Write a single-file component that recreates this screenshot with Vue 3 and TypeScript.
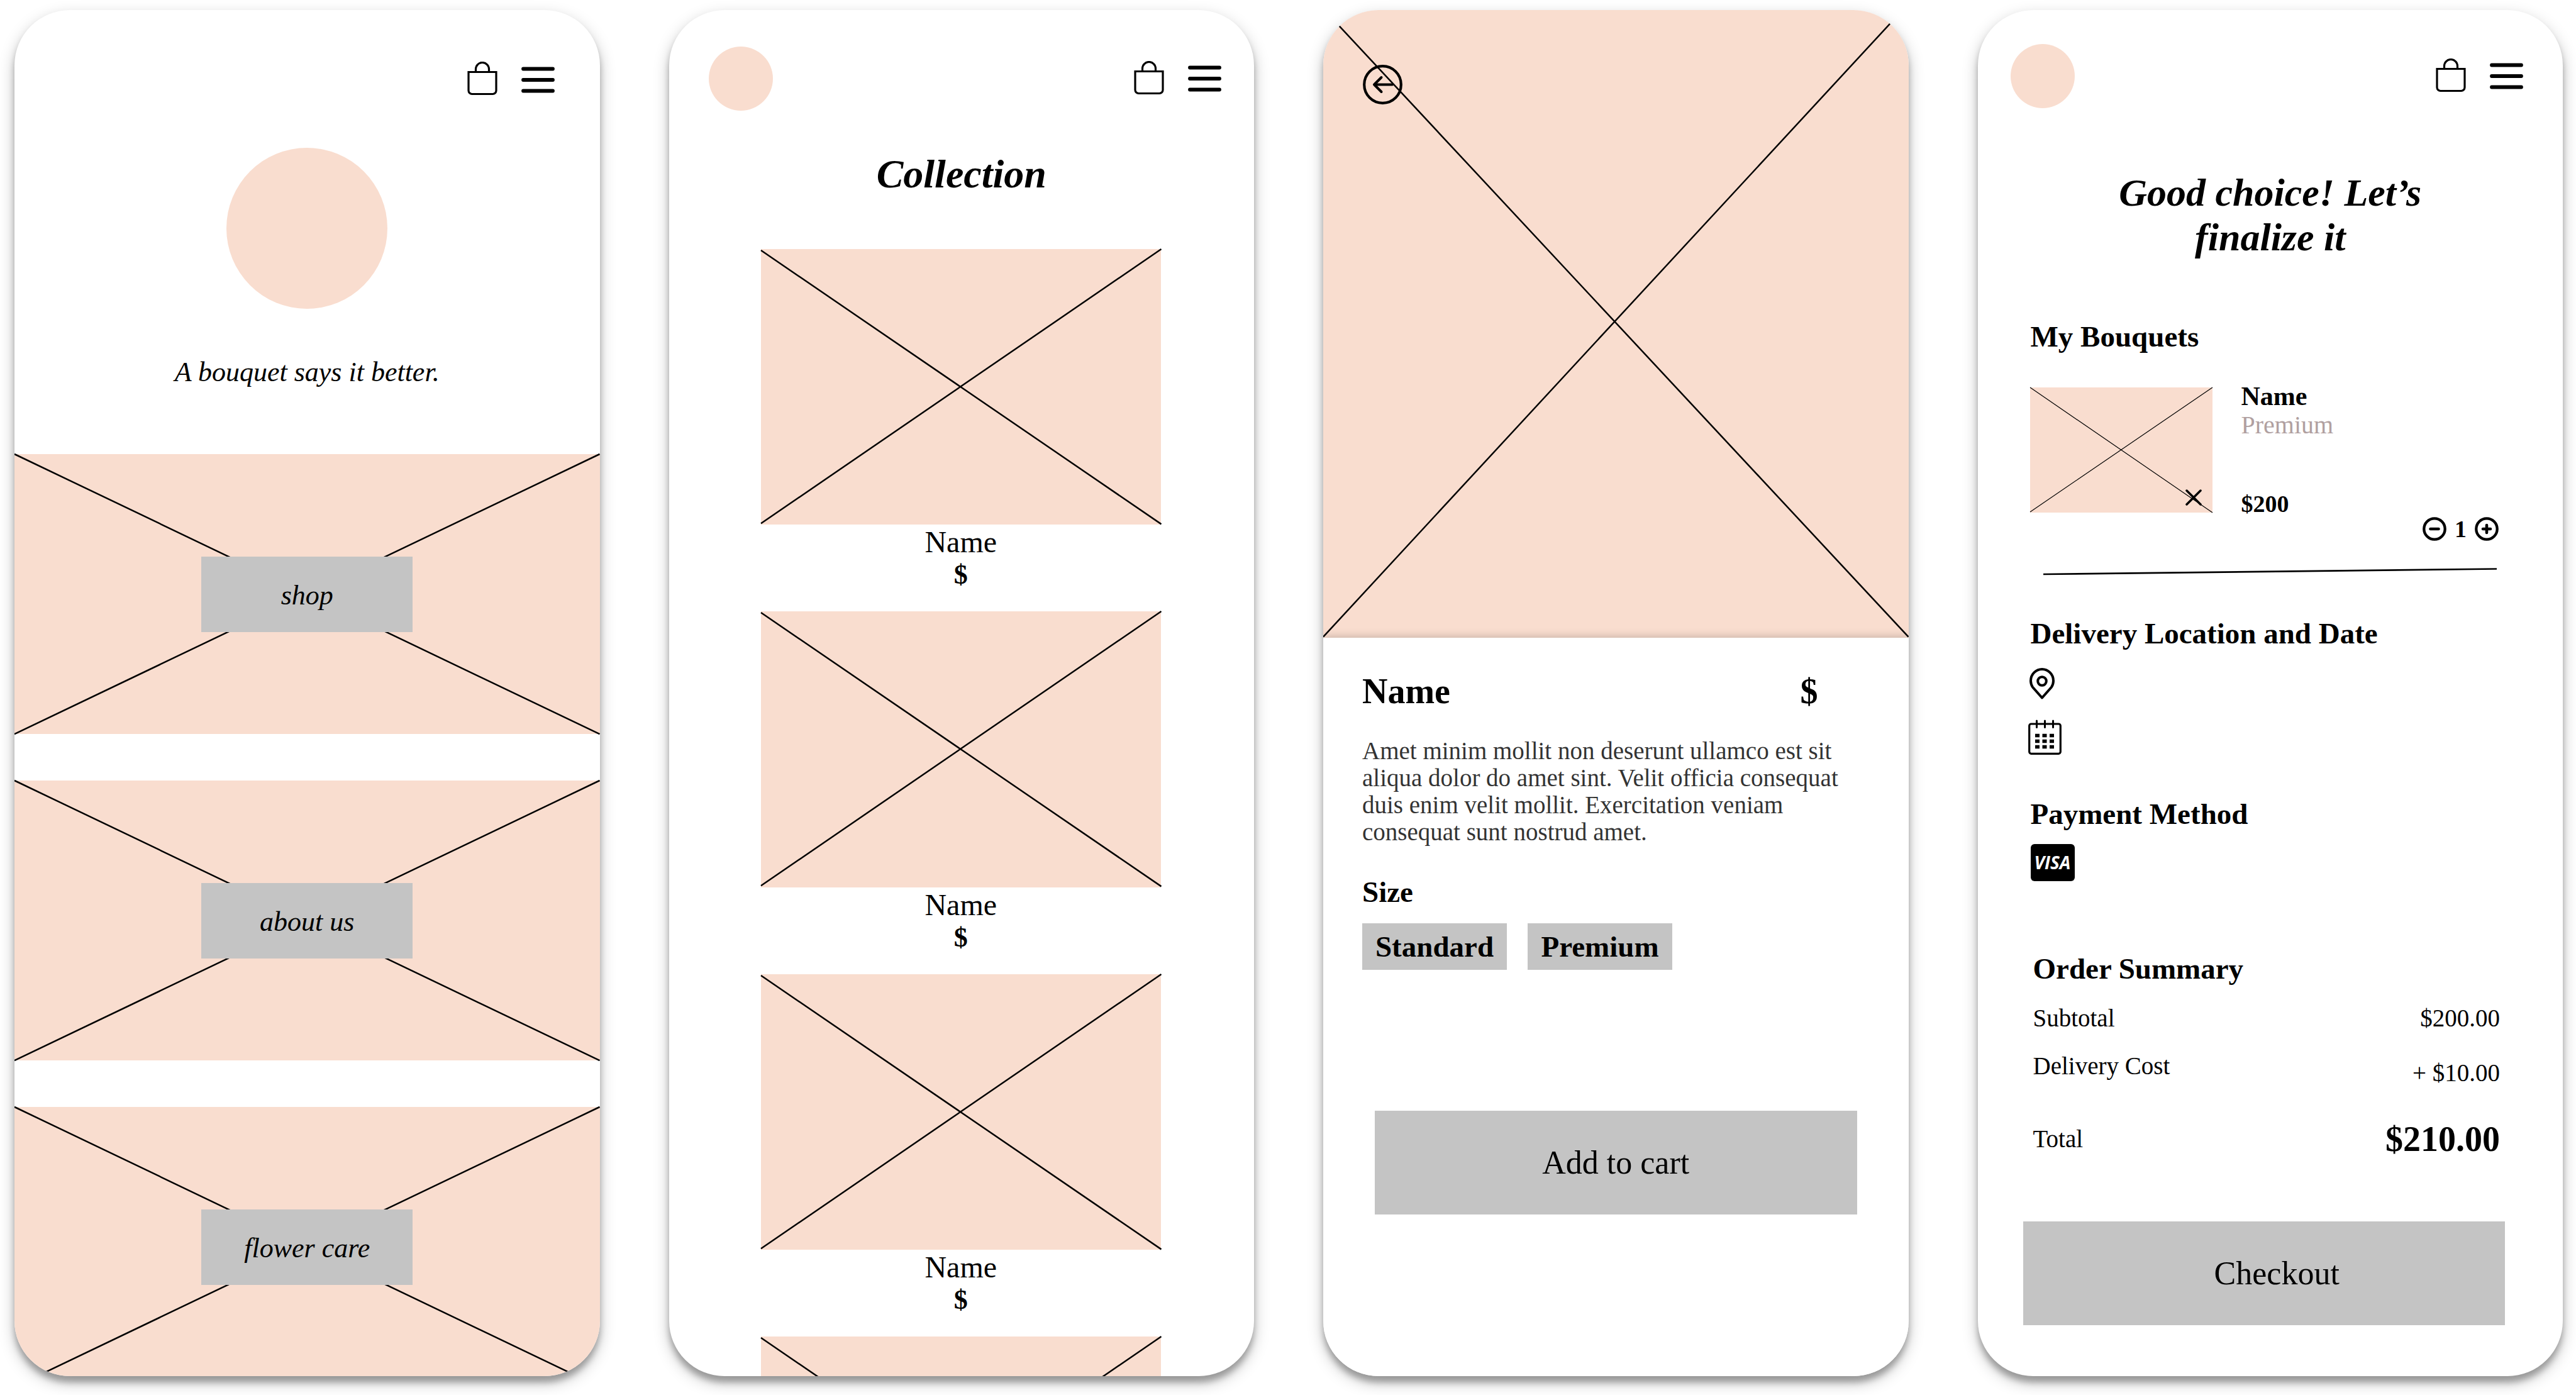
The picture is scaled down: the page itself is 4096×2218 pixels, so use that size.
<script setup lang="ts">
import { ref } from 'vue'

interface Product {
  id: number
  name?: string
  price?: string
}

interface SummaryLine {
  label: string
  amount: string
  kind: string
}

const links: string[] = ['shop', 'about us', 'flower care']
const products: Product[] = [
  { id: 1, name: 'Name', price: '$' },
  { id: 2, name: 'Name', price: '$' },
  { id: 3, name: 'Name', price: '$' },
  { id: 4 },
]
const sizes: string[] = ['Standard', 'Premium']
const quantity = ref<number>(1)

const summary: SummaryLine[] = [
  { label: 'Subtotal', amount: '$200.00', kind: 'row-subtotal' },
  { label: 'Delivery Cost', amount: '+ $10.00', kind: 'row-delivery' },
  { label: 'Total', amount: '$210.00', kind: 'row-total' },
]

function decrease(): void {
  if (quantity.value > 1) quantity.value -= 1
}
</script>

<template>
  <svg class="sprite" aria-hidden="true">
    <symbol id="bag" viewBox="0 0 48 57">
      <path
        d="M2 16.500H46V46a5.500 5.500 0 0 1-5.500 5.500H7.500A5.500 5.500 0 0 1 2 46Z M13.500 16.500V12a10.500 10.500 0 0 1 21 0V16.500"
        fill="none"
        stroke="#000"
        stroke-width="3.200"
      />
    </symbol>
    <symbol id="menu" viewBox="0 0 53 42">
      <path d="M3 3.500H50M3 21H50M3 38.500H50" stroke="#000" stroke-width="5.800" stroke-linecap="round" />
    </symbol>
  </svg>

  <main class="board">
    <!-- Home -->
    <section class="phone">
      <header class="bar bar-home">
        <button class="icon" type="button" aria-label="Bag"><svg class="bag"><use href="#bag" /></svg></button>
        <button class="icon" type="button" aria-label="Menu"><svg class="menu"><use href="#menu" /></svg></button>
      </header>
      <div class="hero-logo"></div>
      <p class="tagline">A bouquet says it better.</p>
      <nav class="links">
        <div v-for="link in links" :key="link" class="photo link-card">
          <svg class="cross" viewBox="0 0 930 445" preserveAspectRatio="none" aria-hidden="true">
            <path d="M0 0L930 445M0 445L930 0" />
          </svg>
          <a class="link" href="#">{{ link }}</a>
        </div>
      </nav>
    </section>

    <!-- Collection -->
    <section class="phone">
      <header class="bar bar-collection">
        <div class="logo"></div>
        <button class="icon" type="button" aria-label="Bag"><svg class="bag"><use href="#bag" /></svg></button>
        <button class="icon" type="button" aria-label="Menu"><svg class="menu"><use href="#menu" /></svg></button>
      </header>
      <h1 class="collection-title">Collection</h1>
      <ul class="products">
        <li v-for="product in products" :key="product.id" class="product">
          <div class="photo product-photo">
            <svg class="cross" viewBox="0 0 636 438" preserveAspectRatio="none" aria-hidden="true">
              <path d="M0 2L636 437M0 436L636 0" />
            </svg>
          </div>
          <p v-if="product.name" class="product-name">{{ product.name }}</p>
          <p v-if="product.price" class="product-price">{{ product.price }}</p>
        </li>
      </ul>
    </section>

    <!-- Product -->
    <section class="phone">
      <div class="photo detail-photo">
        <svg class="cross" viewBox="0 0 930 997" preserveAspectRatio="none" aria-hidden="true">
          <path d="M0 -2L930 996M0 996L930 -10" />
        </svg>
        <button class="icon back" type="button" aria-label="Back">
          <svg viewBox="0 0 63 63" fill="none" stroke="#000">
            <circle cx="31.500" cy="31.500" r="29.300" stroke-width="4.200" />
            <path d="M47 31.500H18M29.500 20L18 31.500L29.500 43" stroke-width="4" stroke-linecap="round" stroke-linejoin="round" />
          </svg>
        </button>
      </div>
      <div class="panel">
        <div class="detail-head">
          <h1>Name</h1>
          <span>$</span>
        </div>
        <p class="description">
          Amet minim mollit non deserunt ullamco est sit aliqua dolor do amet sint. Velit officia consequat duis enim
          velit mollit. Exercitation veniam consequat sunt nostrud amet.
        </p>
        <h2 class="heading size-heading">Size</h2>
        <div class="sizes">
          <button v-for="size in sizes" :key="size" class="size" type="button">{{ size }}</button>
        </div>
        <button class="action add" type="button">Add to cart</button>
      </div>
    </section>

    <!-- Checkout -->
    <section class="phone">
      <header class="bar bar-checkout">
        <div class="logo"></div>
        <button class="icon" type="button" aria-label="Bag"><svg class="bag"><use href="#bag" /></svg></button>
        <button class="icon" type="button" aria-label="Menu"><svg class="menu"><use href="#menu" /></svg></button>
      </header>
      <h1 class="checkout-title">Good choice! Let’s finalize it</h1>

      <h2 class="heading bouquets-heading">My Bouquets</h2>
      <div class="item">
        <div class="photo item-photo">
          <svg class="cross thin" viewBox="0 0 290 199" preserveAspectRatio="none" aria-hidden="true">
            <path d="M0 0L290 199M0 198L290 0" />
          </svg>
          <button class="icon remove" type="button" aria-label="Remove">
            <svg viewBox="0 0 26 26"><path d="M2 2L24 24M24 2L2 24" stroke="#000" stroke-width="3.500" stroke-linecap="round" /></svg>
          </button>
        </div>
        <div class="item-info">
          <h3>Name</h3>
          <p class="item-size">Premium</p>
          <p class="item-price">$200</p>
        </div>
      </div>
      <div class="stepper">
        <button class="icon round" type="button" aria-label="Decrease" @click="decrease">
          <svg viewBox="0 0 38 38" fill="none" stroke="#000" stroke-width="4.300">
            <circle cx="19" cy="19" r="16.700" /><path d="M12.500 19H25.500" stroke-width="4.600" stroke-linecap="round" />
          </svg>
        </button>
        <output class="count">{{ quantity }}</output>
        <button class="icon round" type="button" aria-label="Increase" @click="quantity += 1">
          <svg viewBox="0 0 38 38" fill="none" stroke="#000" stroke-width="4.300">
            <circle cx="19" cy="19" r="16.700" /><path d="M13 19H25M19 13V25" stroke-width="4.600" stroke-linecap="round" />
          </svg>
        </button>
      </div>
      <svg class="divider" viewBox="0 0 721 12" preserveAspectRatio="none" aria-hidden="true">
        <path d="M0 10L721 1.500" stroke="#000" stroke-width="2.600" />
      </svg>

      <h2 class="heading delivery-heading">Delivery Location and Date</h2>
      <div class="delivery-options">
        <button class="icon pin" type="button" aria-label="Location">
          <svg viewBox="0 0 44 51" fill="none" stroke="#000" stroke-width="4">
            <path
              d="M22 47.500L7 30.500C5 27.500 4 24 4 20.500A18 18.500 0 0 1 40 20.500C40 24 39 27.500 37 30.500Z"
              stroke-linejoin="round"
            />
            <circle cx="22" cy="21" r="6.800" />
          </svg>
        </button>
        <button class="icon calendar" type="button" aria-label="Date">
          <svg viewBox="0 0 53 56">
            <rect x="1.700" y="7" width="49.600" height="47.300" rx="3" fill="none" stroke="#000" stroke-width="3.200" />
            <path d="M13.500 2V12.500M26.500 2V12.500M39.500 2V12.500" stroke="#000" stroke-width="3" stroke-linecap="round" />
            <path d="M11 25.500H41M11 34.500H41M11 43.500H41" stroke="#000" stroke-width="5.400" stroke-dasharray="7 4.500" />
          </svg>
        </button>
      </div>

      <h2 class="heading payment-heading">Payment Method</h2>
      <div class="visa">VISA</div>

      <h2 class="heading summary-heading">Order Summary</h2>
      <table class="summary">
        <tbody>
          <tr v-for="line in summary" :key="line.kind" :class="line.kind">
            <th scope="row">{{ line.label }}</th>
            <td>{{ line.amount }}</td>
          </tr>
        </tbody>
      </table>
      <button class="action checkout" type="button">Checkout</button>
    </section>
  </main>
</template>

<style>
body {
  margin: 0;
  background: #fff;
}
</style>

<style scoped>
.sprite {
  position: absolute;
  width: 0;
  height: 0;
}

.board {
  display: grid;
  grid-template-columns: repeat(4, minmax(0, 1fr));
  grid-template-rows: minmax(0, 1fr);
  gap: 110px;
  box-sizing: border-box;
  height: 100vh;
  padding: 16px 21px 30px 23px;
  color: #000;
  font-family: 'Liberation Serif', 'Times New Roman', serif;
}

.phone {
  overflow: hidden;
  border-radius: 88px;
  background: #fff;
  box-shadow: 0 10px 10px rgba(0, 0, 0, 0.25), 0 10px 25px rgba(0, 0, 0, 0.25);
}

h1,
h2,
h3,
p,
ul {
  margin: 0;
  padding: 0;
}

button {
  padding: 0;
  border: 0;
  color: inherit;
  font-family: inherit;
  cursor: pointer;
}

.icon {
  display: block;
  background: none;
}

.icon svg {
  display: block;
  width: 100%;
  height: 100%;
}

.icon .bag {
  width: 48px;
  height: 57px;
}

.icon .menu {
  width: 53px;
  height: 42px;
}

.bar {
  display: flex;
  align-items: center;
  justify-content: flex-end;
  gap: 38px;
}

.bar-home {
  padding: 82px 72px 0 0;
}

.bar-collection {
  padding: 58px 52px 0 63px;
}

.bar-checkout {
  padding: 54px 63px 0 52px;
}

.logo {
  width: 102px;
  height: 102px;
  margin-right: auto;
  border-radius: 50%;
  background: #f9ddcf;
}

.photo {
  position: relative;
  background: #f9ddcf;
}

.cross {
  position: absolute;
  inset: 0;
  width: 100%;
  height: 100%;
  overflow: visible;
  fill: none;
  stroke: #000;
  stroke-width: 2.5;
}

.cross.thin {
  stroke-width: 1.2;
}

/* Home */
.hero-logo {
  width: 256px;
  height: 256px;
  margin: 80px auto 0;
  border-radius: 50%;
  background: #f9ddcf;
}

.tagline {
  margin-top: 75px;
  font-size: 44px;
  font-style: italic;
  line-height: 52px;
  text-align: center;
}

.links {
  display: grid;
  gap: 74px;
  margin-top: 104px;
}

.link-card {
  display: flex;
  align-items: center;
  justify-content: center;
  aspect-ratio: 930 / 445;
}

.link {
  position: relative;
  width: 336px;
  padding-top: 4px;
  background: #c4c4c4;
  color: #000;
  font-size: 44px;
  font-style: italic;
  line-height: 116px;
  text-align: center;
  text-decoration: none;
}

/* Collection */
.collection-title {
  margin-top: 65px;
  font-size: 64px;
  font-style: italic;
  line-height: 72px;
  text-align: center;
}

.products {
  margin: 83px 148px 0 146px;
  list-style: none;
}

.product {
  margin-bottom: 32px;
  line-height: 52px;
  text-align: center;
}

.product-photo {
  margin-bottom: 2px;
  aspect-ratio: 636 / 438;
}

.product-name {
  font-size: 48px;
}

.product-price {
  font-size: 44px;
  font-weight: 700;
}

/* Product */
.detail-photo {
  aspect-ratio: 930 / 997;
}

.back {
  position: absolute;
  top: 87px;
  left: 63px;
  width: 63px;
  height: 63px;
}

.panel {
  position: relative;
  height: 100%;
  padding: 53px 62px 0;
  background: #fff;
  box-shadow: 0 0 14px rgba(0, 0, 0, 0.25);
}

.detail-head {
  display: flex;
  justify-content: space-between;
  padding-right: 82px;
  font-size: 56px;
  font-weight: 700;
  line-height: 64px;
}

.detail-head h1 {
  font-size: 56px;
}

.description {
  margin-top: 41px;
  color: #333;
  font-size: 39px;
  line-height: 43px;
}

.heading {
  margin-left: 84px;
  font-size: 47px;
  line-height: 56px;
}

.size-heading {
  margin: 46px 0 22px;
}

.sizes {
  display: flex;
  gap: 33px;
}

.size {
  width: 230px;
  background: #c4c4c4;
  font-size: 47px;
  font-weight: 700;
  line-height: 74px;
}

.action {
  display: block;
  background: #c4c4c4;
  font-size: 52px;
  line-height: 165px;
}

.add {
  width: calc(100% - 40px);
  margin: 224px 20px 0;
}

/* Checkout */
.checkout-title {
  margin-top: 99px;
  padding: 0 160px;
  font-size: 62px;
  font-style: italic;
  line-height: 71px;
  text-align: center;
}

.bouquets-heading {
  margin-top: 94px;
}

.item {
  display: flex;
  align-items: flex-start;
  gap: 46px;
  margin: 44px 84px 0 83px;
}

.item-photo {
  width: 290px;
  margin-top: 9px;
  aspect-ratio: 290 / 199;
}

.remove {
  position: absolute;
  right: 17px;
  bottom: 11px;
  width: 26px;
  height: 26px;
}

.item-info h3 {
  font-size: 42px;
  line-height: 46px;
}

.item-size {
  color: #b0a0a0;
  font-size: 40px;
  line-height: 46px;
}

.item-price {
  margin-top: 82px;
  font-size: 38px;
  font-weight: 700;
  line-height: 40px;
}

.stepper {
  display: flex;
  align-items: center;
  justify-content: flex-end;
  gap: 13px;
  margin-right: 102px;
}

.round {
  width: 38px;
  height: 38px;
}

.count {
  font-size: 38px;
  font-weight: 700;
  line-height: 40px;
}

.divider {
  display: block;
  width: calc(100% - 209px);
  height: 12px;
  margin: 42px 105px 0 104px;
}

.delivery-heading {
  margin-top: 64px;
}

.delivery-options {
  display: grid;
  gap: 31px;
  margin: 27px 0 0 80px;
}

.pin {
  width: 44px;
  height: 51px;
}

.calendar {
  width: 53px;
  height: 56px;
}

.payment-heading {
  margin-top: 66px;
}

.visa {
  width: 70px;
  margin: 20px 0 0 84px;
  border-radius: 6px;
  background: #000;
  color: #fff;
  font-family: 'Open Sans', sans-serif;
  font-size: 28px;
  font-style: italic;
  font-weight: 700;
  line-height: 59px;
  text-align: center;
}

.summary-heading {
  margin: 111px 0 28px 88px;
}

.summary {
  width: calc(100% - 188px);
  margin-left: 88px;
  border-collapse: collapse;
  font-size: 39px;
  line-height: 46px;
}

.summary th,
.summary td {
  padding: 0;
  vertical-align: top;
}

.summary th {
  font-weight: 400;
  text-align: left;
}

.summary td {
  text-align: right;
}

.summary .row-subtotal td {
  padding-bottom: 30px;
}

.summary .row-delivery td {
  padding: 11px 0 59px;
}

.summary .row-total td {
  font-size: 56px;
  font-weight: 700;
}

.checkout {
  width: calc(100% - 164px);
  margin: 108px 92px 0 72px;
  padding-left: 41px;
}
</style>
